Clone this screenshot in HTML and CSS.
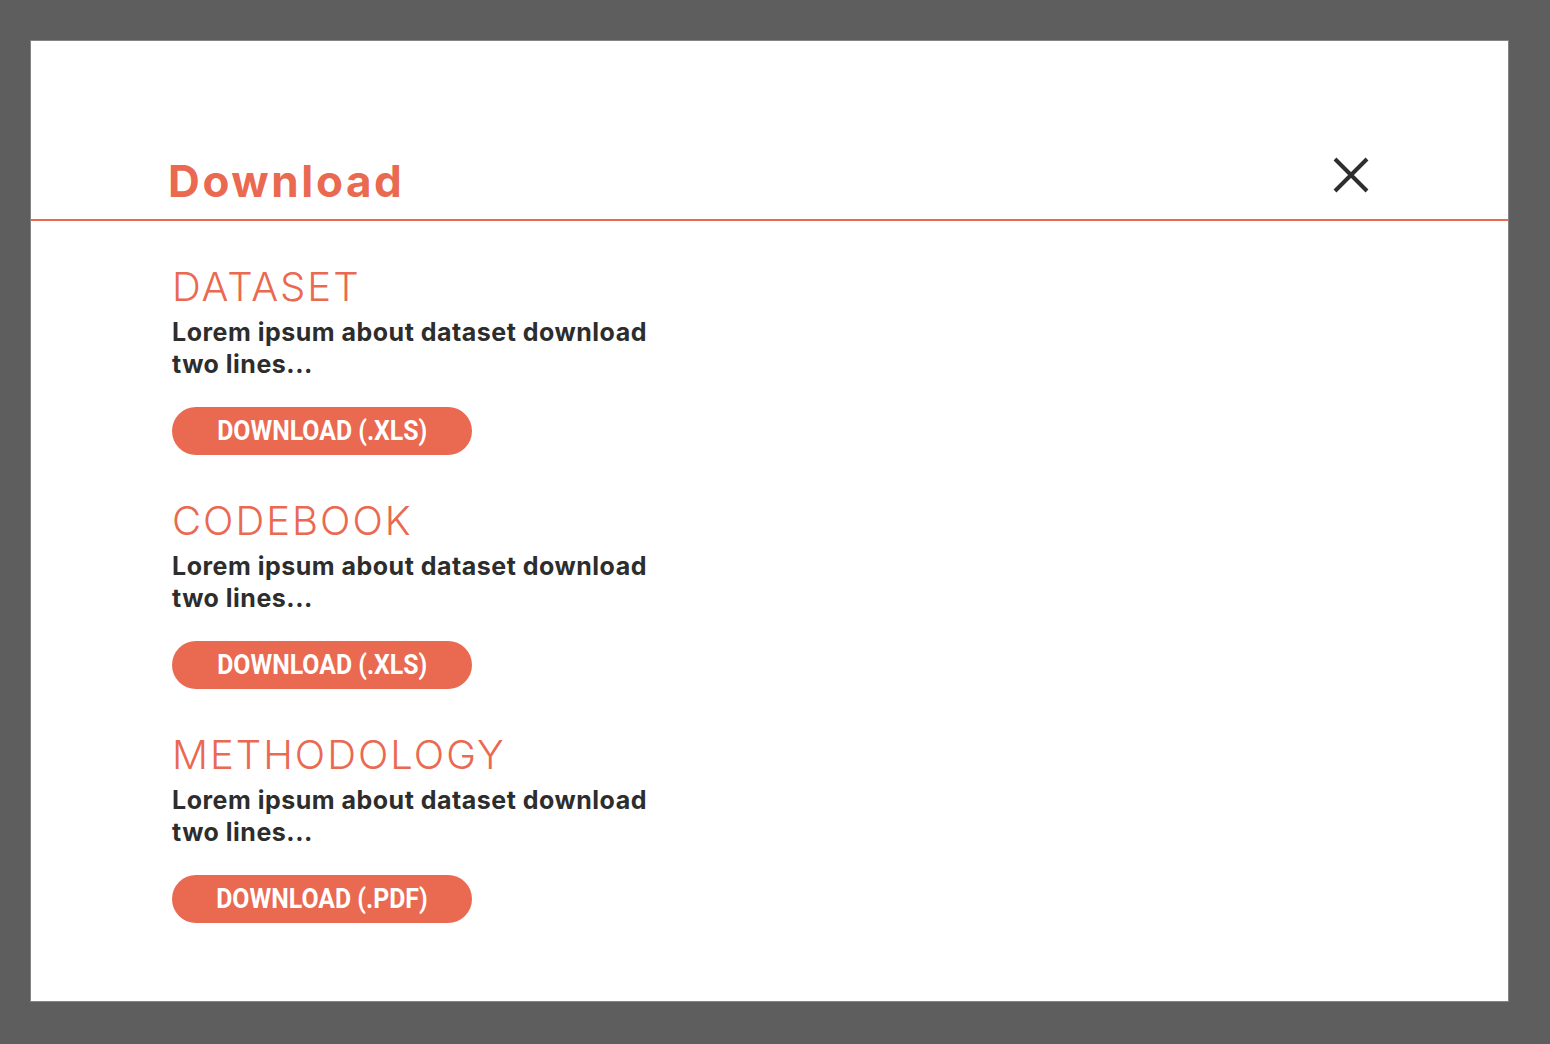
FILE: index.html
```html
<!DOCTYPE html>
<html lang="en">
<head>
<meta charset="utf-8">
<title>Download</title>
<link rel="stylesheet" href="styles.css">
</head>
<body>
<div class="panel">
  <header class="head">
    <h1 class="title">Download</h1>
    <button class="close" aria-label="Close">
      <svg width="36" height="36" viewBox="0 0 36 36"><path d="M2 2 L34 34 M34 2 L2 34" stroke="#2e2e2e" stroke-width="4" fill="none"/></svg>
    </button>
  </header>
  <main class="content">
    <section class="item">
      <h2 class="item-title">DATASET</h2>
      <p class="item-text">Lorem ipsum about dataset download<br>two lines...</p>
      <a class="btn" href="#"><span class="btn-label">DOWNLOAD (.XLS)</span></a>
    </section>
    <section class="item">
      <h2 class="item-title">CODEBOOK</h2>
      <p class="item-text">Lorem ipsum about dataset download<br>two lines...</p>
      <a class="btn" href="#"><span class="btn-label">DOWNLOAD (.XLS)</span></a>
    </section>
    <section class="item">
      <h2 class="item-title">METHODOLOGY</h2>
      <p class="item-text">Lorem ipsum about dataset download<br>two lines...</p>
      <a class="btn" href="#"><span class="btn-label">DOWNLOAD (.PDF)</span></a>
    </section>
  </main>
</div>
</body>
</html>
```
FILE: styles.css
```css
html, body {
  margin: 0;
  padding: 0;
}
body {
  background: #5e5e5e;
  width: 1550px;
  height: 1044px;
  overflow: hidden;
  padding-top: 41px;
  box-sizing: border-box;
}
.panel {
  margin-left: 31px;
  width: 1477px;
  height: 960px;
  background: #ffffff;
  box-shadow: 0 0 0 1px #858585;
}
.head {
  box-sizing: border-box;
  height: 180px;
  border-bottom: 2px solid #ea6951;
  display: flex;
  align-items: flex-end;
  justify-content: space-between;
  padding: 0 139px 16px 137px;
}
.title {
  margin: 0;
  font-family: Inter, "Noto Sans", sans-serif;
  font-weight: 700;
  font-size: 44px;
  line-height: 44px;
  letter-spacing: 2.6px;
  color: #ea6951;
}
.close {
  border: 0;
  background: none;
  padding: 0;
  width: 36px;
  height: 36px;
  margin-bottom: 10px;
  cursor: pointer;
}
.close svg {
  display: block;
}
.content {
  padding: 44px 0 0 141px;
}
.item {
  margin-bottom: 44px;
}
.item-title {
  margin: 0;
  font-family: Inter, "Noto Sans", sans-serif;
  font-weight: 300;
  font-size: 40px;
  line-height: 44px;
  color: #ea6951;
  letter-spacing: 2px;
}
.item-text {
  margin: 7px 0 27px;
  font-family: Inter, "Noto Sans", sans-serif;
  font-weight: 700;
  font-size: 25px;
  line-height: 32px;
  color: #2d2d2d;
  letter-spacing: 0.5px;
}
.btn {
  display: flex;
  align-items: center;
  justify-content: center;
  width: 300px;
  height: 48px;
  border-radius: 24px;
  background: #ea6951;
  text-decoration: none;
}
.btn-label {
  display: inline-block;
  font-family: Roboto, "Liberation Sans", sans-serif;
  font-weight: 700;
  font-size: 27px;
  line-height: 1;
  color: #ffffff;
  transform: scaleX(0.92);
  white-space: nowrap;
}
```
